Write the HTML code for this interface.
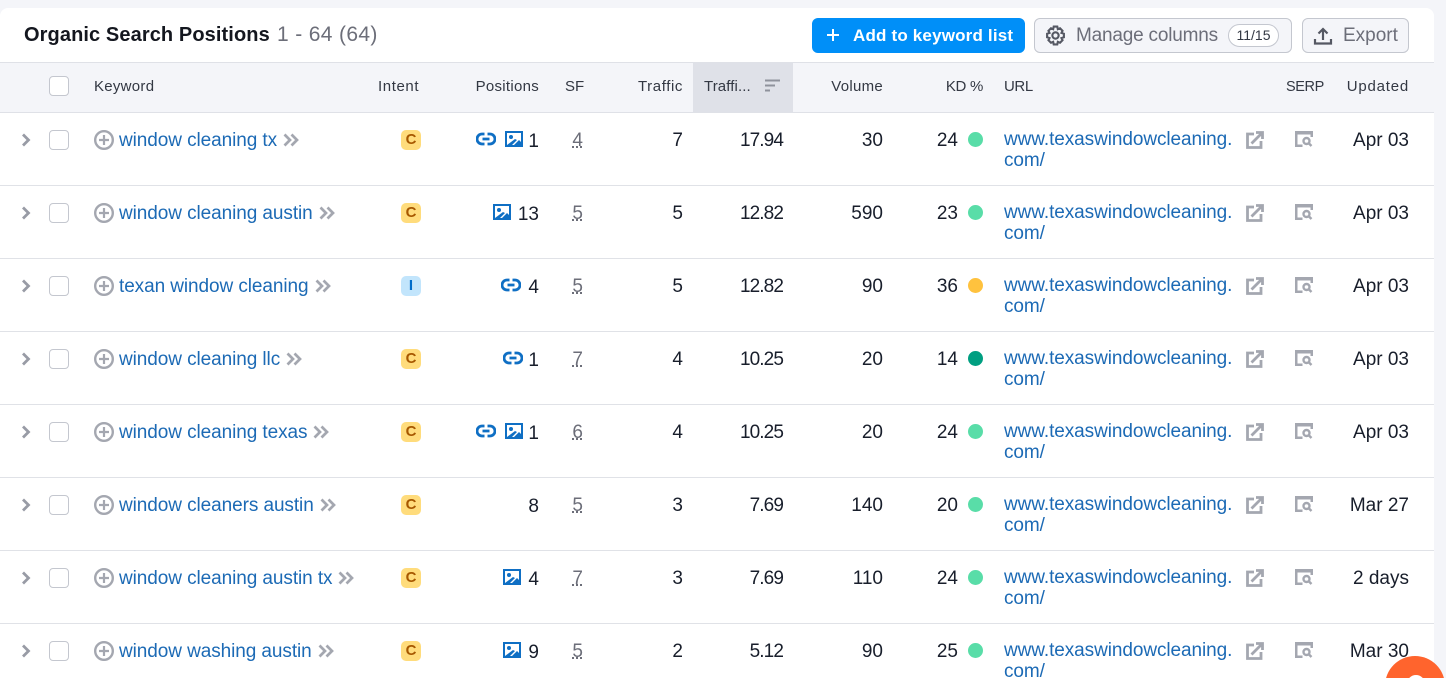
<!DOCTYPE html>
<html><head><meta charset="utf-8"><style>
html,body{margin:0;padding:0;width:1446px;height:678px;overflow:hidden;background:#f4f5f9}
body{font-family:"Liberation Sans",sans-serif;color:#181e2b;position:relative}
#card{position:absolute;left:0;top:8px;width:1434px;height:670px;background:#fff;border-radius:8px 8px 0 0;overflow:hidden}
.a{position:absolute;white-space:nowrap}
#title{left:24px;top:14px;font-size:20px;line-height:26px;font-weight:700;color:#14171f;letter-spacing:.1px}
#count{left:277px;top:14px;font-size:21px;line-height:26px;color:#6c6e79;letter-spacing:.35px}
.btn{position:absolute;top:10px;height:35px;box-sizing:border-box;border-radius:6px;font-size:19px;line-height:33px}
#add{left:812px;width:213px;background:#008ff8;color:#fff;height:35px;font-weight:400}
.gr{background:#f4f5f9;border:1px solid #c4c7cf;color:#6c6e79}
#hd{position:absolute;left:0;top:54px;width:1434px;height:51px;box-sizing:border-box;background:#f4f5f9;border-top:1px solid #dfe1e7;border-bottom:1px solid #dfe1e7}
#hd .a{top:15px;font-size:15px;line-height:18px;color:#333843;letter-spacing:.28px}
.r{text-align:right}
.row{position:absolute;left:0;width:1434px;height:73px;box-sizing:border-box;border-bottom:1px solid #e0e2e7;font-size:19px}
.row .a{top:17px;line-height:22px}
.cb{position:absolute;left:49px;top:17px;width:20px;height:20px;box-sizing:border-box;border:1px solid #c4c7cf;border-radius:4px;background:#fff}
.kw{left:119px;color:#1c6ab5;letter-spacing:-.08px}
.kw svg{margin-left:6px;vertical-align:-1px}
.bd{position:absolute;left:401px;top:17px;width:20px;height:20px;border-radius:5px;background:#ffdc7c;color:#a75800;font-size:15px;font-weight:700;line-height:20px;text-align:center}
.bd.i{background:#c2e5fc;color:#006dca}
.pos{position:absolute;right:895px;top:18px;height:22px;display:flex;align-items:center;gap:7px;line-height:22px}
.pos svg{margin-top:-7px}
.pos svg+svg{margin-left:2px}
.pos .o{margin-left:-2px}
.row .ico{top:17px}
.sf{right:851px;color:#6c6e79;text-decoration:underline dotted #6c6e79;text-underline-offset:1px}
.t1{right:751px}.t2{right:651px;letter-spacing:-.9px}.v{right:551px}.kd{right:476px}
.dot{position:absolute;left:968px;top:19px;width:15px;height:15px;border-radius:50%}
.url{left:1004px;color:#1c6ab5;line-height:21px!important;top:15.500px!important;letter-spacing:-.08px}
.ex{position:absolute;left:1246px;top:18px}
.se{position:absolute;left:1295px;top:18px}
.up{right:25px}
#fw{position:absolute;left:1380px;top:650px}
</style></head><body>
<svg width="0" height="0" style="position:absolute"><defs>
<symbol id="chev" viewBox="0 0 10 16"><path d="M2 2.500l5.500 5.500-5.500 5.500" fill="none" stroke="#989ba5" stroke-width="2.800"/></symbol>
<symbol id="plus" viewBox="0 0 20 20"><circle cx="10" cy="10" r="8.800" fill="none" stroke="#a4a7b0" stroke-width="2.400"/><path d="M10 5v10M5 10h10" stroke="#a4a7b0" stroke-width="2.200"/></symbol>
<symbol id="dbl" viewBox="0 0 16 14"><path d="M1.500 1.500L7 7l-5.500 5.500M8.500 1.500L14 7l-5.500 5.500" fill="none" stroke="#a4a7b0" stroke-width="2.700"/></symbol>
<symbol id="link" viewBox="0 0 20 14"><path d="M8.500 2H6a5 5 0 0 0 0 10h2.500M11.500 2H14a5 5 0 0 1 0 10h-2.500M6.500 7h7" fill="none" stroke="#0f6fc4" stroke-width="2.800"/></symbol>
<symbol id="img" viewBox="0 0 18 16"><rect x="1" y="1" width="16" height="14" fill="#fff" stroke="#0f6fc4" stroke-width="2"/><circle cx="6" cy="6" r="2" fill="#0f6fc4"/><path d="M2 14l8-6 2 1-5 5zM9 14l5-5 2 2v3z" fill="#0f6fc4"/></symbol>
<symbol id="ext" viewBox="0 0 18 18"><path d="M8 3H1.500v13.500H15V10" fill="none" stroke="#a4a7b0" stroke-width="2.800"/><path d="M5.500 12.500L16 2M10 1.500h6.500V8" fill="none" stroke="#a4a7b0" stroke-width="2.800"/></symbol>
<symbol id="ser" viewBox="0 0 18 16"><path d="M18 0H0v16h7.500v-2.500H2.500V3.500h13V6H18z" fill="#a4a7b0"/><circle cx="11.500" cy="10" r="3" fill="none" stroke="#a4a7b0" stroke-width="2.400"/><path d="M13.500 12l3 3" stroke="#a4a7b0" stroke-width="2.400"/></symbol>
</defs></svg>
<div id="card">
<div class="a" id="title">Organic Search Positions</div><div class="a" id="count">1 - 64 (64)</div>
<div class="btn" id="add"><svg class="a" style="left:14px;top:10px" width="14" height="14" viewBox="0 0 14 14"><path d="M7 1v12M1 7h12" stroke="#fff" stroke-width="2"/></svg><span class="a" style="left:41px;top:1px;font-weight:700;font-size:17px;letter-spacing:.18px">Add to keyword list</span></div>
<div class="btn gr" style="left:1034px;width:258px"><svg class="a" style="left:10px;top:6px" width="21" height="21" viewBox="0 0 20 20"><path d="M8.300 1.500h3.400l.5 2.500 2.100-.9 2.400 2.400-1 2 2.300.8v3.400l-2.300.8 1 2-2.400 2.400-2.100-.9-.5 2.500H8.300l-.5-2.500-2.100.9-2.400-2.400 1-2-2.300-.8V8.300l2.300-.8-1-2 2.400-2.400 2.100.9z" fill="none" stroke="#555863" stroke-width="2"/><circle cx="10" cy="10" r="3" fill="none" stroke="#555863" stroke-width="2"/></svg><span class="a" style="left:41px;top:0;letter-spacing:-.2px">Manage columns</span><span class="a" style="left:193px;top:5px;width:51px;height:23px;box-sizing:border-box;border:1px solid #c4c7cf;border-radius:12px;background:#fff;color:#333843;font-size:14px;line-height:21px;text-align:center">11/15</span></div>
<div class="btn gr" style="left:1302px;width:107px"><svg class="a" style="left:10px;top:7px" width="20" height="20" viewBox="0 0 20 20"><path d="M10 14V3M5.500 7.500L10 3l4.500 4.500M2 13v4.500h16V13" fill="none" stroke="#555863" stroke-width="2.200"/></svg><span class="a" style="left:40px;top:0">Export</span></div>
<div id="hd">
<div class="cb" style="top:13px"></div>
<div class="a" style="left:94px">Keyword</div><div class="a" style="left:378px;letter-spacing:.6px!important">Intent</div><div class="a r" style="right:895px">Positions</div><div class="a" style="left:565px;letter-spacing:0!important">SF</div><div class="a r" style="right:751px;letter-spacing:.6px!important">Traffic</div>
<div style="position:absolute;left:693px;top:0;width:100px;height:49px;background:#dfe1e8"></div>
<div class="a" style="left:704px;letter-spacing:.1px!important">Traffi...</div>
<svg class="a" style="left:765px;top:16px!important" width="16" height="13" viewBox="0 0 16 13"><path d="M0 1.500h15M0 6.500h10M0 11.500h5" stroke="#8f929c" stroke-width="2"/></svg>
<div class="a r" style="right:551px">Volume</div><div class="a r" style="right:451px;letter-spacing:-.3px!important">KD %</div><div class="a" style="left:1004px;letter-spacing:-.4px!important">URL</div><div class="a" style="left:1286px;font-size:14.500px!important;letter-spacing:-.4px!important">SERP</div><div class="a r" style="right:25px;letter-spacing:.8px!important">Updated</div>
</div>
<div class="row" style="top:105px"><svg class="a ico" style="left:21px;top:19px" width="10" height="16"><use href="#chev"/></svg><div class="cb"></div><svg class="a ico" style="left:94px" width="20" height="20"><use href="#plus"/></svg><div class="a kw">window cleaning tx<svg width="16" height="14"><use href="#dbl"/></svg></div><div class="bd">C</div><div class="pos"><svg width="20" height="14"><use href="#link"/></svg><svg width="18" height="16"><use href="#img"/></svg><span class="o">1</span></div><div class="a sf">4</div><div class="a t1">7</div><div class="a t2">17.94</div><div class="a v">30</div><div class="a kd">24</div><div class="dot" style="background:#59dda8"></div><div class="a url">www.texaswindowcleaning.<br>com/</div><svg class="ex" width="18" height="18"><use href="#ext"/></svg><svg class="se" width="18" height="16"><use href="#ser"/></svg><div class="a up">Apr 03</div></div>
<div class="row" style="top:178px"><svg class="a ico" style="left:21px;top:19px" width="10" height="16"><use href="#chev"/></svg><div class="cb"></div><svg class="a ico" style="left:94px" width="20" height="20"><use href="#plus"/></svg><div class="a kw">window cleaning austin<svg width="16" height="14"><use href="#dbl"/></svg></div><div class="bd">C</div><div class="pos"><svg width="18" height="16"><use href="#img"/></svg><span>13</span></div><div class="a sf">5</div><div class="a t1">5</div><div class="a t2">12.82</div><div class="a v">590</div><div class="a kd">23</div><div class="dot" style="background:#59dda8"></div><div class="a url">www.texaswindowcleaning.<br>com/</div><svg class="ex" width="18" height="18"><use href="#ext"/></svg><svg class="se" width="18" height="16"><use href="#ser"/></svg><div class="a up">Apr 03</div></div>
<div class="row" style="top:251px"><svg class="a ico" style="left:21px;top:19px" width="10" height="16"><use href="#chev"/></svg><div class="cb"></div><svg class="a ico" style="left:94px" width="20" height="20"><use href="#plus"/></svg><div class="a kw">texan window cleaning<svg width="16" height="14"><use href="#dbl"/></svg></div><div class="bd i">I</div><div class="pos"><svg width="20" height="14"><use href="#link"/></svg><span>4</span></div><div class="a sf">5</div><div class="a t1">5</div><div class="a t2">12.82</div><div class="a v">90</div><div class="a kd">36</div><div class="dot" style="background:#ffc23e"></div><div class="a url">www.texaswindowcleaning.<br>com/</div><svg class="ex" width="18" height="18"><use href="#ext"/></svg><svg class="se" width="18" height="16"><use href="#ser"/></svg><div class="a up">Apr 03</div></div>
<div class="row" style="top:324px"><svg class="a ico" style="left:21px;top:19px" width="10" height="16"><use href="#chev"/></svg><div class="cb"></div><svg class="a ico" style="left:94px" width="20" height="20"><use href="#plus"/></svg><div class="a kw">window cleaning llc<svg width="16" height="14"><use href="#dbl"/></svg></div><div class="bd">C</div><div class="pos"><svg width="20" height="14"><use href="#link"/></svg><span class="o">1</span></div><div class="a sf">7</div><div class="a t1">4</div><div class="a t2">10.25</div><div class="a v">20</div><div class="a kd">14</div><div class="dot" style="background:#009f81"></div><div class="a url">www.texaswindowcleaning.<br>com/</div><svg class="ex" width="18" height="18"><use href="#ext"/></svg><svg class="se" width="18" height="16"><use href="#ser"/></svg><div class="a up">Apr 03</div></div>
<div class="row" style="top:397px"><svg class="a ico" style="left:21px;top:19px" width="10" height="16"><use href="#chev"/></svg><div class="cb"></div><svg class="a ico" style="left:94px" width="20" height="20"><use href="#plus"/></svg><div class="a kw">window cleaning texas<svg width="16" height="14"><use href="#dbl"/></svg></div><div class="bd">C</div><div class="pos"><svg width="20" height="14"><use href="#link"/></svg><svg width="18" height="16"><use href="#img"/></svg><span class="o">1</span></div><div class="a sf">6</div><div class="a t1">4</div><div class="a t2">10.25</div><div class="a v">20</div><div class="a kd">24</div><div class="dot" style="background:#59dda8"></div><div class="a url">www.texaswindowcleaning.<br>com/</div><svg class="ex" width="18" height="18"><use href="#ext"/></svg><svg class="se" width="18" height="16"><use href="#ser"/></svg><div class="a up">Apr 03</div></div>
<div class="row" style="top:470px"><svg class="a ico" style="left:21px;top:19px" width="10" height="16"><use href="#chev"/></svg><div class="cb"></div><svg class="a ico" style="left:94px" width="20" height="20"><use href="#plus"/></svg><div class="a kw">window cleaners austin<svg width="16" height="14"><use href="#dbl"/></svg></div><div class="bd">C</div><div class="pos"><span>8</span></div><div class="a sf">5</div><div class="a t1">3</div><div class="a t2">7.69</div><div class="a v">140</div><div class="a kd">20</div><div class="dot" style="background:#59dda8"></div><div class="a url">www.texaswindowcleaning.<br>com/</div><svg class="ex" width="18" height="18"><use href="#ext"/></svg><svg class="se" width="18" height="16"><use href="#ser"/></svg><div class="a up">Mar 27</div></div>
<div class="row" style="top:543px"><svg class="a ico" style="left:21px;top:19px" width="10" height="16"><use href="#chev"/></svg><div class="cb"></div><svg class="a ico" style="left:94px" width="20" height="20"><use href="#plus"/></svg><div class="a kw">window cleaning austin tx<svg width="16" height="14"><use href="#dbl"/></svg></div><div class="bd">C</div><div class="pos"><svg width="18" height="16"><use href="#img"/></svg><span>4</span></div><div class="a sf">7</div><div class="a t1">3</div><div class="a t2">7.69</div><div class="a v">110</div><div class="a kd">24</div><div class="dot" style="background:#59dda8"></div><div class="a url">www.texaswindowcleaning.<br>com/</div><svg class="ex" width="18" height="18"><use href="#ext"/></svg><svg class="se" width="18" height="16"><use href="#ser"/></svg><div class="a up">2 days</div></div>
<div class="row" style="top:616px;height:54px;border-bottom:0;overflow:hidden"><svg class="a ico" style="left:21px;top:19px" width="10" height="16"><use href="#chev"/></svg><div class="cb"></div><svg class="a ico" style="left:94px" width="20" height="20"><use href="#plus"/></svg><div class="a kw">window washing austin<svg width="16" height="14"><use href="#dbl"/></svg></div><div class="bd">C</div><div class="pos"><svg width="18" height="16"><use href="#img"/></svg><span>9</span></div><div class="a sf">5</div><div class="a t1">2</div><div class="a t2">5.12</div><div class="a v">90</div><div class="a kd">25</div><div class="dot" style="background:#59dda8"></div><div class="a url" style="height:38px;overflow:hidden">www.texaswindowcleaning.<br>com/</div><svg class="ex" width="18" height="18"><use href="#ext"/></svg><svg class="se" width="18" height="16"><use href="#ser"/></svg><div class="a up">Mar 30</div></div>
</div>
<svg id="fw" width="66" height="28" viewBox="0 0 66 28"><circle cx="35" cy="36" r="30" fill="#ff642d"/><circle cx="36" cy="34" r="9" fill="#fff"/></svg>
</body></html>
